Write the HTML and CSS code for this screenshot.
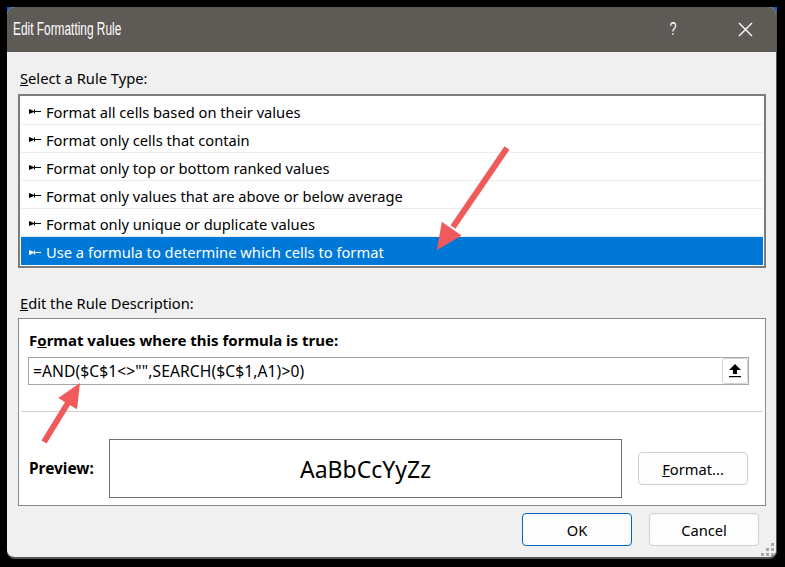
FILE: index.html
```html
<!DOCTYPE html>
<html lang="en">
<head>
    <meta charset="UTF-8">
    <title>Edit Formatting Rule</title>
    <link rel="stylesheet" href="styles.css">
</head>
<body>

    <div class="frame">
        <div class="dialog">
            <div class="titlebar">
                <span class="title">Edit Formatting Rule</span>
                <span class="help">?</span>
                <span class="close">
                    <svg width="15" height="15" viewBox="0 0 15 15"><path d="M1 1L14 14M14 1L1 14" stroke="#fff" stroke-width="1.4" fill="none"/></svg>
                </span>
            </div>

            <div class="content">
                <div class="label"><u>S</u>elect a Rule Type:</div>
                <div class="rule-list">
                    <div class="rule"><svg class="bullet" width="12" height="7" viewBox="0 0 12 7"><path d="M0 1L5 3V1.5H6V5.5H5V4L0 6Z" fill="currentColor"/><rect x="5" y="3" width="7" height="1" fill="currentColor"/></svg>Format all cells based on their values</div>
                    <div class="rule"><svg class="bullet" width="12" height="7" viewBox="0 0 12 7"><path d="M0 1L5 3V1.5H6V5.5H5V4L0 6Z" fill="currentColor"/><rect x="5" y="3" width="7" height="1" fill="currentColor"/></svg>Format only cells that contain</div>
                    <div class="rule"><svg class="bullet" width="12" height="7" viewBox="0 0 12 7"><path d="M0 1L5 3V1.5H6V5.5H5V4L0 6Z" fill="currentColor"/><rect x="5" y="3" width="7" height="1" fill="currentColor"/></svg>Format only top or bottom ranked values</div>
                    <div class="rule"><svg class="bullet" width="12" height="7" viewBox="0 0 12 7"><path d="M0 1L5 3V1.5H6V5.5H5V4L0 6Z" fill="currentColor"/><rect x="5" y="3" width="7" height="1" fill="currentColor"/></svg>Format only values that are above or below average</div>
                    <div class="rule"><svg class="bullet" width="12" height="7" viewBox="0 0 12 7"><path d="M0 1L5 3V1.5H6V5.5H5V4L0 6Z" fill="currentColor"/><rect x="5" y="3" width="7" height="1" fill="currentColor"/></svg>Format only unique or duplicate values</div>
                    <div class="rule selected"><svg class="bullet" width="12" height="7" viewBox="0 0 12 7"><path d="M0 1L5 3V1.5H6V5.5H5V4L0 6Z" fill="currentColor"/><rect x="5" y="3" width="7" height="1" fill="currentColor"/></svg>Use a formula to determine which cells to format</div>
                </div>

                <div class="label desc-label"><u>E</u>dit the Rule Description:</div>
                <div class="desc-box">
                    <div class="desc-title">F<u>o</u>rmat values where this formula is true:</div>
                    <div class="formula">
                        <span class="formula-text">=AND($C$1&lt;&gt;"",SEARCH($C$1,A1)&gt;0)</span>
                        <span class="collapse-btn">
                            <svg width="14" height="16" viewBox="0 0 14 16"><path d="M7 1L13 7H9V11H5V7H1Z" fill="#000"/><rect x="1" y="13" width="12" height="1.2" fill="#000"/></svg>
                        </span>
                    </div>
                    <div class="separator"></div>
                    <div class="preview-row">
                        <div class="preview-label">Preview:</div>
                        <div class="preview-box">AaBbCcYyZz</div>
                        <button class="btn format-btn"><u>F</u>ormat...</button>
                    </div>
                </div>

                <div class="footer">
                    <button class="btn default">OK</button>
                    <button class="btn">Cancel</button>
                </div>
            </div>

            <svg class="grip" width="13" height="13" viewBox="0 0 13 13">
                <rect x="10" y="0" width="3" height="3" fill="#a8a8a8"/>
                <rect x="5" y="5" width="3" height="3" fill="#a8a8a8"/>
                <rect x="10" y="5" width="3" height="3" fill="#a8a8a8"/>
                <rect x="0" y="10" width="3" height="3" fill="#a8a8a8"/>
                <rect x="5" y="10" width="3" height="3" fill="#a8a8a8"/>
                <rect x="10" y="10" width="3" height="3" fill="#a8a8a8"/>
            </svg>
        </div>
    </div>

    <!-- annotation arrows drawn over the dialog -->
    <svg class="arrows" width="785" height="567" viewBox="0 0 785 567">
        <line x1="507" y1="148" x2="453" y2="227" stroke="#f05a5a" stroke-width="6"/>
        <polygon points="437,250 441.8,221.8 461.6,235.4" fill="#f05a5a"/>
        <line x1="44" y1="442" x2="68.5" y2="402" stroke="#f05a5a" stroke-width="6"/>
        <polygon points="80,383 58.2,397.9 77,409.3" fill="#f05a5a"/>
    </svg>

</body>
</html>
```

FILE: styles.css
```css
body {
    margin: 0;
    background-color: #000;
    font-family: "Segoe UI", "Noto Sans", sans-serif;
    font-size: 14.7px;
    color: #000;
    position: relative;
    width: 785px;
    height: 567px;
    overflow: hidden;
}

.frame {
    margin: 7px 0 0 7px;
    width: 770px;
    height: 552px;
    background: linear-gradient(#1c5cc4 0, #1c5cc4 14px, #000 14px);
}

.dialog {
    position: relative;
    box-sizing: border-box;
    height: 100%;
    background-color: #f0f0f0;
    border-radius: 8px;
    border-right: 1px solid #555;
    border-bottom: 2px solid #555;
    overflow: hidden;
}

.titlebar {
    height: 45px;
    background-color: #5e5a56;
    color: #fff;
    display: flex;
    align-items: center;
    padding-left: 6px;
}

.title {
    display: inline-block;
    font-family: "Liberation Sans", sans-serif;
    font-size: 18px;
    transform: scaleX(0.66);
    transform-origin: left center;
    width: 440px;
    white-space: nowrap;
}

.help {
    margin-left: 215px;
    font-family: "Liberation Sans", sans-serif;
    font-size: 18px;
    transform: scaleX(0.7);
}

.close {
    display: flex;
    margin-left: 60px;
}

.content {
    padding: 0 10px 0 11px;
}

.label {
    height: 20px;
    line-height: 20px;
    margin-top: 16px;
    margin-left: 2px;
    margin-bottom: 6px;
}

.rule-list {
    background-color: #fff;
    border: 2px solid #7d7d7d;
    padding: 1px;
}

.rule {
    height: 28px;
    box-sizing: border-box;
    border-bottom: 1px solid #ececec;
    display: flex;
    align-items: center;
    padding-left: 8px;
    padding-top: 2px;
}

.rule:last-child {
    border-bottom: none;
}

.bullet {
    margin-right: 5px;
}

.rule.selected {
    background-color: #0078d7;
    color: #fff;
}

.desc-label {
    margin-top: 25px;
    margin-bottom: 5px;
}

.desc-box {
    background-color: #fff;
    border: 1px solid #8a8a8a;
    padding: 11px 16px 7px 10px;
}

.desc-title {
    font-weight: bold;
    font-size: 15px;
    height: 20px;
    line-height: 20px;
    margin-bottom: 7px;
}

.formula {
    height: 28px;
    box-sizing: border-box;
    border: 1px solid #a5a5a5;
    margin-left: -1px;
    display: flex;
    align-items: center;
    justify-content: space-between;
    padding-left: 4px;
}

.formula-text {
    font-size: 15.6px;
    letter-spacing: 0.1px;
}

.collapse-btn {
    width: 26px;
    height: 26px;
    box-sizing: border-box;
    border: 1px solid #d4d4d4;
    border-radius: 3px;
    display: flex;
    align-items: center;
    justify-content: center;
}

.separator {
    height: 1px;
    background-color: #cfcfcf;
    margin: 26px -14px 27px -8px;
}

.preview-row {
    display: flex;
    align-items: center;
}

.preview-label {
    font-weight: bold;
    font-size: 15.4px;
    width: 80px;
}

.preview-box {
    width: 513px;
    height: 59px;
    box-sizing: border-box;
    border: 1px solid #707070;
    display: flex;
    align-items: center;
    justify-content: center;
    font-size: 23px;
}

.btn {
    width: 110px;
    height: 33px;
    box-sizing: border-box;
    background-color: #fdfdfd;
    border: 1px solid #d0d0d0;
    border-radius: 4px;
    font-family: "Segoe UI", "Noto Sans", sans-serif;
    font-size: 14.7px;
    color: #000;
    padding: 0;
}

.format-btn {
    margin-left: 16px;
}

.btn.default {
    border-color: #0067c0;
}

.footer {
    display: flex;
    justify-content: flex-end;
    gap: 17px;
    padding-top: 7px;
    padding-right: 7px;
}

.grip {
    position: absolute;
    right: 2px;
    bottom: 1px;
}

.arrows {
    position: absolute;
    top: 0;
    left: 0;
}
```
